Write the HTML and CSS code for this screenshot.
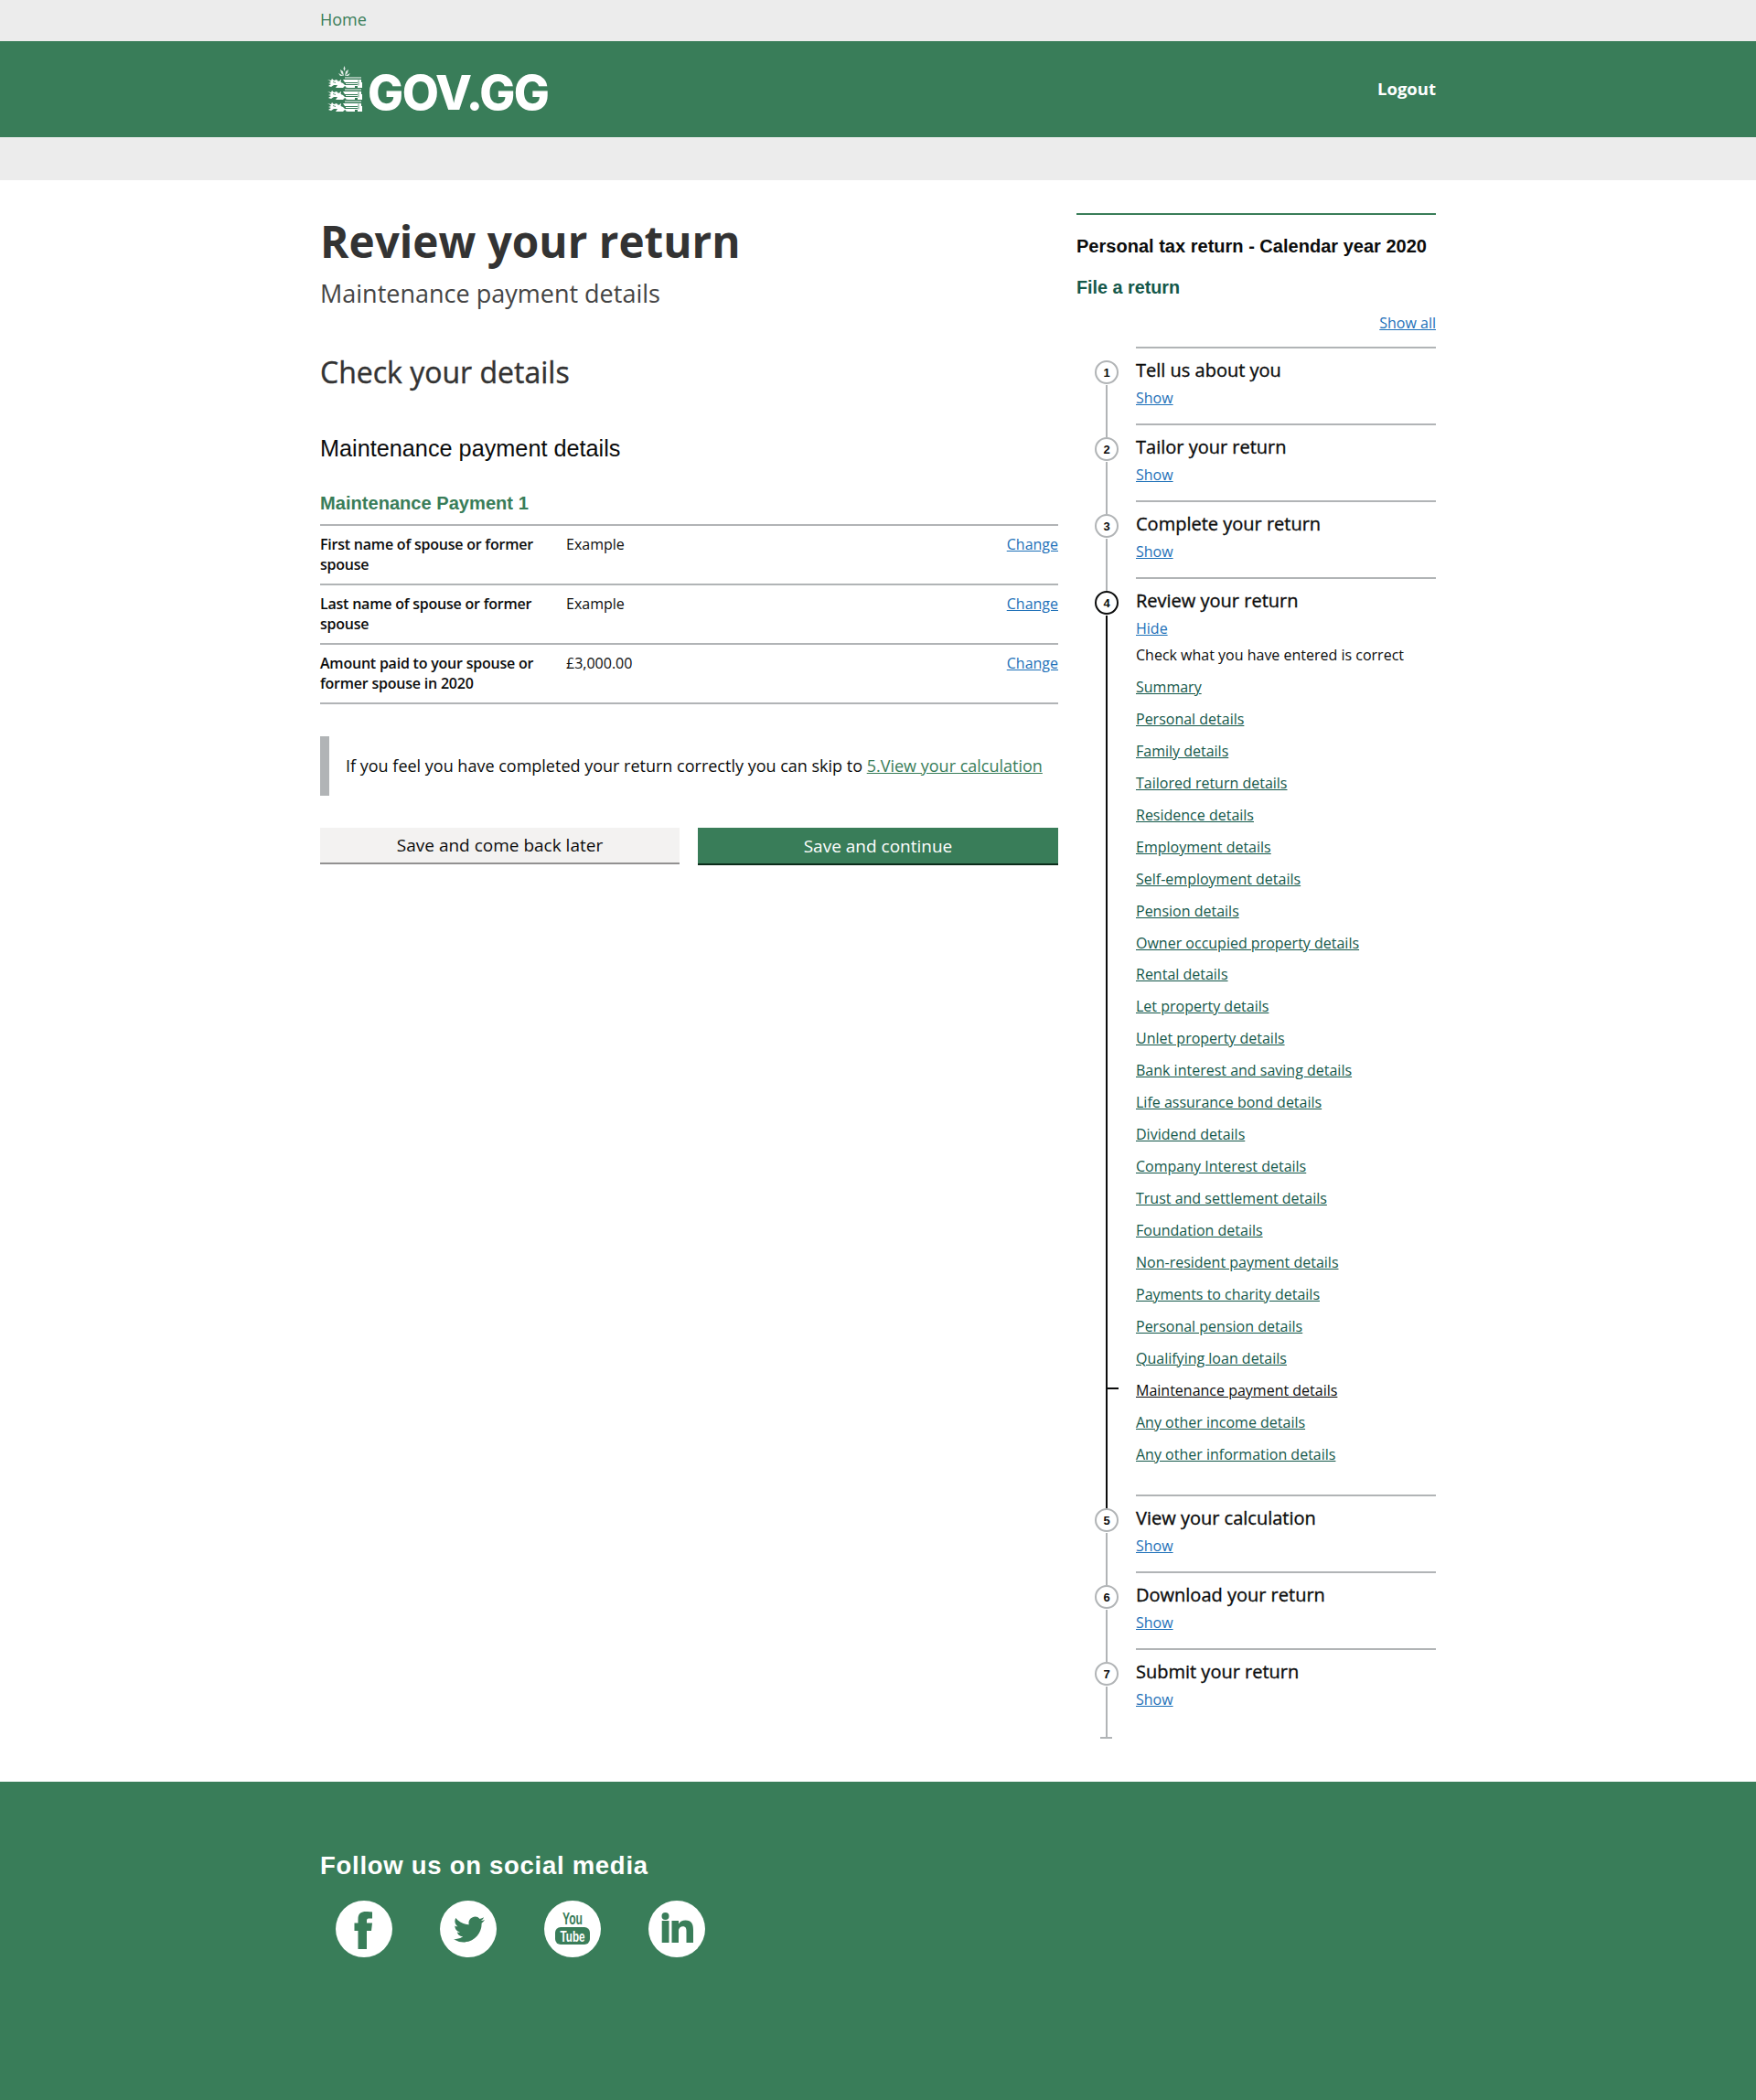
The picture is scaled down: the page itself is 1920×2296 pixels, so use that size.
FILE: index.html
```html
<!DOCTYPE html>
<html lang="en">
<head>
<meta charset="utf-8">
<title>Review your return</title>
<link rel="stylesheet" href="styles.css">
</head>
<body>
<nav class="topbar"><div class="wrap"><a class="home" href="#">Home</a></div></nav>
<header class="masthead">
  <div class="wrap masthead-row">
    <a class="logo" href="#">
      <svg class="crest" viewBox="0 0 38 51" width="38" height="51" aria-hidden="true">
        <defs>
          <g id="lion">
            <path d="M0 4l4 1 1-2 2 2 3-1 2 2 3-2v3l2 1 2 2h14V7H19l-2-3 20 0v3h1v6h-5v-2l-3 0v2h-8l-3-2-2 2H9l2-3-4 0-3 2-3-1 3-2-3-1 3-1-2-2z" fill="#fff"/>
            <path d="M20 8.500h14M19 2h18M8 7h6M20 12h8" stroke="#fff" stroke-width="1"/>
            <path d="M6 6.500l3 1M14 5.500l2 2M34 4.500v6" stroke="#397d59" stroke-width=".8"/>
          </g>
        </defs>
        <g fill="#fff" opacity=".85">
          <path d="M18.500 0l1 3-1 3-1-3z"/><path d="M14 4l3 2 1 5-3-3zM23 4l-3 2-1 5 3-3z"/><path d="M12 8l4 2 2 1-4 0zM25 8l-4 2-2 1 4 0z"/>
        </g>
        <use href="#lion" y="11"/>
        <use href="#lion" y="24"/>
        <use href="#lion" y="37"/>
      </svg>
      <span class="logo-text">GOV.GG</span>
    </a>
    <a class="logout" href="#">Logout</a>
  </div>
</header>
<div class="subbar"></div>
<main class="wrap page">
  <section class="content">
    <h1 class="title">Review your return</h1>
    <p class="subtitle">Maintenance payment details</p>
    <h2 class="check">Check your details</h2>
    <h3 class="section">Maintenance payment details</h3>
    <h4 class="group">Maintenance Payment 1</h4>
    <dl class="summary">
      <div class="row"><dt>First name of spouse or former spouse</dt><dd>Example</dd><a href="#">Change</a></div>
      <div class="row"><dt>Last name of spouse or former spouse</dt><dd>Example</dd><a href="#">Change</a></div>
      <div class="row"><dt>Amount paid to your spouse or former spouse in 2020</dt><dd>£3,000.00</dd><a href="#">Change</a></div>
    </dl>
    <p class="inset">If you feel you have completed your return correctly you can skip to <a href="#">5.View your calculation</a></p>
    <div class="actions">
      <a class="btn btn-light" href="#">Save and come back later</a>
      <a class="btn btn-green" href="#">Save and continue</a>
    </div>
  </section>
  <aside class="side">
    <h2 class="side-title">Personal tax return - Calendar year 2020</h2>
    <h3 class="side-sub">File a return</h3>
    <div class="showall"><a href="#">Show all</a></div>
    <ol class="steps">
      <li class="step"><span class="num">1</span><h4>Tell us about you</h4><a class="toggle" href="#">Show</a></li>
      <li class="step"><span class="num">2</span><h4>Tailor your return</h4><a class="toggle" href="#">Show</a></li>
      <li class="step"><span class="num">3</span><h4>Complete your return</h4><a class="toggle" href="#">Show</a></li>
      <li class="step active"><span class="num">4</span><h4>Review your return</h4><a class="toggle" href="#">Hide</a>
        <p class="step-note">Check what you have entered is correct</p>
        <ul class="links">
          <li><a href="#">Summary</a></li>
          <li><a href="#">Personal details</a></li>
          <li><a href="#">Family details</a></li>
          <li><a href="#">Tailored return details</a></li>
          <li><a href="#">Residence details</a></li>
          <li><a href="#">Employment details</a></li>
          <li><a href="#">Self-employment details</a></li>
          <li><a href="#">Pension details</a></li>
          <li><a href="#">Owner occupied property details</a></li>
          <li><a href="#">Rental details</a></li>
          <li><a href="#">Let property details</a></li>
          <li><a href="#">Unlet property details</a></li>
          <li><a href="#">Bank interest and saving details</a></li>
          <li><a href="#">Life assurance bond details</a></li>
          <li><a href="#">Dividend details</a></li>
          <li><a href="#">Company Interest details</a></li>
          <li><a href="#">Trust and settlement details</a></li>
          <li><a href="#">Foundation details</a></li>
          <li><a href="#">Non-resident payment details</a></li>
          <li><a href="#">Payments to charity details</a></li>
          <li><a href="#">Personal pension details</a></li>
          <li><a href="#">Qualifying loan details</a></li>
          <li class="current"><a href="#">Maintenance payment details</a></li>
          <li><a href="#">Any other income details</a></li>
          <li><a href="#">Any other information details</a></li>
        </ul>
      </li>
      <li class="step"><span class="num">5</span><h4>View your calculation</h4><a class="toggle" href="#">Show</a></li>
      <li class="step"><span class="num">6</span><h4>Download your return</h4><a class="toggle" href="#">Show</a></li>
      <li class="step last"><span class="num">7</span><h4>Submit your return</h4><a class="toggle" href="#">Show</a></li>
    </ol>
  </aside>
</main>
<footer class="footer">
  <div class="wrap">
    <h2 class="follow">Follow us on social media</h2>
    <div class="social">
      <a href="#" aria-label="Facebook"><svg viewBox="0 0 62 62" width="62" height="62"><circle cx="31" cy="31" r="31" fill="#fff"/><path d="M24.500 53V33H20.500V24.500H24.500V20C24.500 14 28 12 33 12C36 12 38.500 12.300 40 12.500V19.500H36C34.500 19.500 34 20.500 34 22V24.500H40L39 33H34V53Z" fill="#397d59"/></svg></a>
      <a href="#" aria-label="Twitter"><svg viewBox="0 0 62 62" width="62" height="62"><circle cx="31" cy="31" r="31" fill="#fff"/><g transform="translate(15 14.500) scale(1.42)"><path fill="#397d59" d="M23.953 4.570a10 10 0 01-2.825.775 4.958 4.958 0 002.163-2.723c-.951.555-2.005.959-3.127 1.184a4.920 4.920 0 00-8.384 4.482C7.690 8.095 4.067 6.130 1.640 3.162a4.822 4.822 0 00-.666 2.475c0 1.710.870 3.213 2.188 4.096a4.904 4.904 0 01-2.228-.616v.060a4.923 4.923 0 003.946 4.827 4.996 4.996 0 01-2.212.085 4.936 4.936 0 004.604 3.417 9.867 9.867 0 01-6.102 2.105c-.390 0-.779-.023-1.170-.067a13.995 13.995 0 007.557 2.209c9.053 0 13.998-7.496 13.998-13.985 0-.210 0-.420-.015-.630A9.935 9.935 0 0024 4.590z"/></g></svg></a>
      <a href="#" aria-label="YouTube"><svg viewBox="0 0 62 62" width="62" height="62"><circle cx="31" cy="31" r="31" fill="#fff"/><text class="yt-you" x="31" y="26" text-anchor="middle" textLength="22" lengthAdjust="spacingAndGlyphs">You</text><rect x="12" y="29" width="38" height="19" rx="6" fill="#397d59"/><text class="yt-tube" x="31" y="45" text-anchor="middle" textLength="27" lengthAdjust="spacingAndGlyphs">Tube</text></svg></a>
      <a href="#" aria-label="LinkedIn"><svg viewBox="0 0 62 62" width="62" height="62"><circle cx="31" cy="31" r="31" fill="#fff"/><circle cx="18.500" cy="17" r="4" fill="#397d59"/><rect x="14.700" y="22" width="7.800" height="24" fill="#397d59"/><path d="M25.500 22H33V25.500C34.500 23 37 21.500 40.500 21.500C47.300 21.500 49 26 49 32V46H41.500V33.500C41.500 30.500 40.800 28.300 37.800 28.300C34.700 28.300 33 30.500 33 33.500V46H25.500Z" fill="#397d59"/></svg></a>
    </div>
  </div>
</footer>
</body>
</html>
```
FILE: styles.css
```css
* { box-sizing: border-box; }
html, body { margin: 0; padding: 0; }
body { font-family: "Open Sans", sans-serif; font-size: 16px; color: #0b0c0c; background: #fff; }
h1, h2, h3, h4, p, dl, dd, ol, ul { margin: 0; padding: 0; }
ol, ul { list-style: none; }
.wrap { width: 1220px; margin: 0 auto; }
.topbar { height: 45px; background: #ececec; }
.home { display: block; width: fit-content; padding-top: 9px; font-size: 18px; line-height: 24px; color: #397d59; text-decoration: none; }
.masthead { height: 105px; background: #397d59; }
.masthead-row { display: flex; align-items: center; justify-content: space-between; height: 100%; }
.logo { display: flex; align-items: flex-start; gap: 6px; padding: 27px 0 0 8px; height: 100%; color: #fff; text-decoration: none; }
.logo-text { font-family: Inter, sans-serif; font-weight: 800; font-size: 52px; line-height: 52px; letter-spacing: -1.500px; margin-top: 4px; }
.logout { font-weight: 700; font-size: 18.500px; color: #fff; text-decoration: none; margin-top: -2px; }
.subbar { height: 47px; background: #ececec; }
.page { display: flex; gap: 20px; height: 1751px; }
.content { width: 807px; padding-top: 36px; }
.title { font-size: 47.700px; line-height: 62px; font-weight: 700; color: #333; }
.subtitle { font-size: 27px; line-height: 36px; color: #444; margin-top: 8px; }
.check { font-size: 32px; line-height: 40px; font-weight: 400; -webkit-text-stroke: .4px #333; color: #333; margin-top: 48px; }
.section { font-family: "Liberation Sans", sans-serif; font-weight: 400; font-size: 25.250px; line-height: 32px; color: #0b0c0c; margin-top: 47px; }
.group { font-family: "Liberation Sans", sans-serif; font-weight: 700; font-size: 20.100px; line-height: 28px; color: #397d59; margin-top: 30px; padding-bottom: 9px; }
.summary { border-top: 2px solid #b1b4b6; }
.row { display: flex; align-items: flex-start; min-height: 65px; padding-top: 9px; border-bottom: 2px solid #b1b4b6; font-size: 16px; line-height: 22px; }
.row dt { width: 269px; padding-right: 20px; font-weight: 600; letter-spacing: -.22px; }
.row dd { flex: 1; }
.row a { color: #1d70b8; }
.inset { margin-top: 35px; height: 65px; border-left: 10px solid #b1b4b6; padding: 20px 0 0 18px; font-size: 18px; line-height: 24px; }
.inset a { color: #397d59; }
.actions { display: flex; gap: 20px; margin-top: 35px; align-items: flex-start; }
.btn { display: flex; align-items: center; justify-content: center; font-size: 19px; text-decoration: none; }
.btn-light { width: 393px; height: 40px; background: #f3f2f1; color: #0b0c0c; border-bottom: 2px solid #929191; }
.btn-green { width: 394px; height: 41px; background: #397d59; color: #fff; border-bottom: 2px solid #0c2c1a; }
.side { width: 393px; margin-top: 36px; }
.side-title { border-top: 2px solid #397d59; padding-top: 22px; font-family: "Liberation Sans", sans-serif; font-size: 20.050px; line-height: 24px; font-weight: 700; color: #0b0c0c; }
.side-sub { font-family: "Liberation Sans", sans-serif; font-size: 19.750px; line-height: 24px; font-weight: 700; color: #14584a; margin-top: 21px; }
.showall { text-align: right; font-size: 16px; line-height: 22px; margin-top: 16px; }
.showall a, .toggle { color: #1d70b8; }
.steps { margin-top: 15px; padding-left: 65px; }
.step { position: relative; height: 84px; border-top: 2px solid #b1b4b6; padding-top: 10px; }
.step h4 { font-size: 20px; line-height: 28px; font-weight: 400; -webkit-text-stroke: .35px #0b0c0c; color: #0b0c0c; }
.toggle { display: block; width: fit-content; font-size: 16px; line-height: 22px; margin-top: 5px; }
.step::before { content: ""; position: absolute; left: -33px; top: 40px; bottom: -15px; width: 2px; background: #b1b4b6; }
.num { position: absolute; left: -45px; top: 13px; width: 26px; height: 26px; z-index: 1; border: 2px solid #b1b4b6; border-radius: 50%; background: #fff; display: flex; align-items: center; justify-content: center; font-family: "Liberation Sans", sans-serif; font-weight: 700; font-size: 13px; }
.active { height: auto; padding-bottom: 28px; }
.active::before { background: #0b0c0c; }
.active .num { border-color: #0b0c0c; }
.step-note { font-size: 16px; line-height: 24px; margin-top: 6px; }
.links { margin-top: 5px; }
.links li { position: relative; height: 34.950px; padding-top: 6px; font-size: 16px; line-height: 24px; }
.links a { color: #14584a; }
.links .current a { color: #0b0c0c; }
.current::before { content: ""; position: absolute; left: -32px; top: 15px; width: 13px; height: 2px; background: #0b0c0c; }
.last { height: 99px; }
.last::before { bottom: 0; }
.last::after { content: ""; position: absolute; left: -39px; bottom: 0; width: 13px; height: 2px; background: #b1b4b6; }
.footer { height: 348px; background: #397d59; color: #fff; }
.follow { font-family: "Liberation Sans", sans-serif; font-weight: 700; font-size: 27.500px; line-height: 34px; letter-spacing: .72px; padding-top: 75px; box-sizing: content-box; }
.social { display: flex; gap: 52px; margin-top: 21px; padding-left: 17px; }
.social a { display: block; height: 62px; }
.yt-you { font-family: "Liberation Sans", sans-serif; font-weight: 700; font-size: 19px; fill: #397d59; }
.yt-tube { font-family: "Liberation Sans", sans-serif; font-weight: 700; font-size: 17px; fill: #fff; }
```
